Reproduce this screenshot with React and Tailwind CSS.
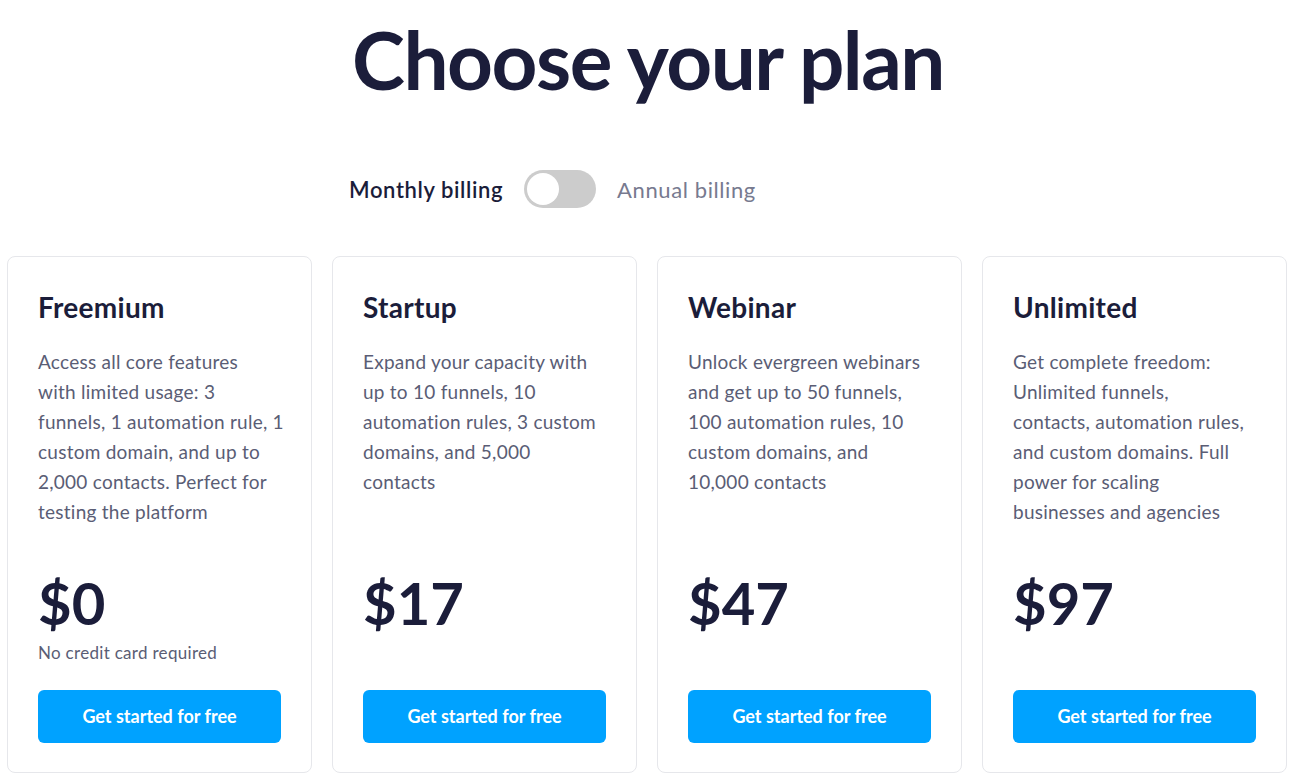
import React, { useState } from "react";

const plans = [
  {
    name: "Freemium",
    lines: [
      "Access all core features",
      "with limited usage: 3",
      "funnels, 1 automation rule, 1",
      "custom domain, and up to",
      "2,000 contacts. Perfect for",
      "testing the platform",
    ],
    price: "$0",
    note: "No credit card required",
  },
  {
    name: "Startup",
    lines: [
      "Expand your capacity with",
      "up to 10 funnels, 10",
      "automation rules, 3 custom",
      "domains, and 5,000",
      "contacts",
    ],
    price: "$17",
  },
  {
    name: "Webinar",
    lines: [
      "Unlock evergreen webinars",
      "and get up to 50 funnels,",
      "100 automation rules, 10",
      "custom domains, and",
      "10,000 contacts",
    ],
    price: "$47",
  },
  {
    name: "Unlimited",
    lines: [
      "Get complete freedom:",
      "Unlimited funnels,",
      "contacts, automation rules,",
      "and custom domains. Full",
      "power for scaling",
      "businesses and agencies",
    ],
    price: "$97",
  },
];

function PlanCard({ plan }) {
  return (
    <div className="flex flex-col rounded-lg border border-[#e6e7eb] bg-white px-[30px] pt-[30px] pb-[29px]">
      <h2 className="text-[28px] leading-10 font-bold tracking-[0.3px] text-[#1b1d3a]">{plan.name}</h2>
      <p className="mt-5 min-h-[180px] text-[19px] leading-[30px] tracking-[0.25px] text-[#5a5d75]">
        {plan.lines.map((l, i) => (
          <span key={i} className="block whitespace-nowrap">
            {l}
          </span>
        ))}
      </p>
      <div className="mt-12 text-[58px] leading-[56px] font-bold text-[#1b1d3a]">{plan.price}</div>
      <p className="mt-2.5 h-6 text-[17px] leading-6 tracking-[0.3px] text-[#5a5d75]">{plan.note}</p>
      <button className="mt-[25px] h-[53px] w-[243px] rounded-md bg-[#00a2ff] text-[18px] font-bold text-white">
        Get started for free
      </button>
    </div>
  );
}

export default function App() {
  const [annual, setAnnual] = useState(false);
  return (
    <div className="min-h-screen bg-white font-['Lato',sans-serif]">
      <h1 className="pt-[16px] text-center text-[80px] leading-[86px] font-bold tracking-[-1.5px] text-[#1b1d3a]">
        Choose your plan
      </h1>
      <div className="mt-[68px] flex items-center justify-center gap-[21px] pr-[191px]">
        <span className="text-[22px] font-semibold tracking-[0.6px] text-[#1b1d3a]">Monthly billing</span>
        <button
          onClick={() => setAnnual(!annual)}
          className="flex h-[38px] w-[72px] items-center rounded-full bg-[#cccccc] p-[3px]"
        >
          <span className={"h-8 w-8 rounded-full bg-white " + (annual ? "ml-auto" : "")}></span>
        </button>
        <span className="text-[22px] tracking-[0.6px] text-[#777a8f]">Annual billing</span>
      </div>
      <div className="mt-[48px] grid grid-cols-4 gap-5 pl-[7px] pr-[9px]">
        {plans.map((p) => (
          <PlanCard key={p.name} plan={p} />
        ))}
      </div>
    </div>
  );
}
